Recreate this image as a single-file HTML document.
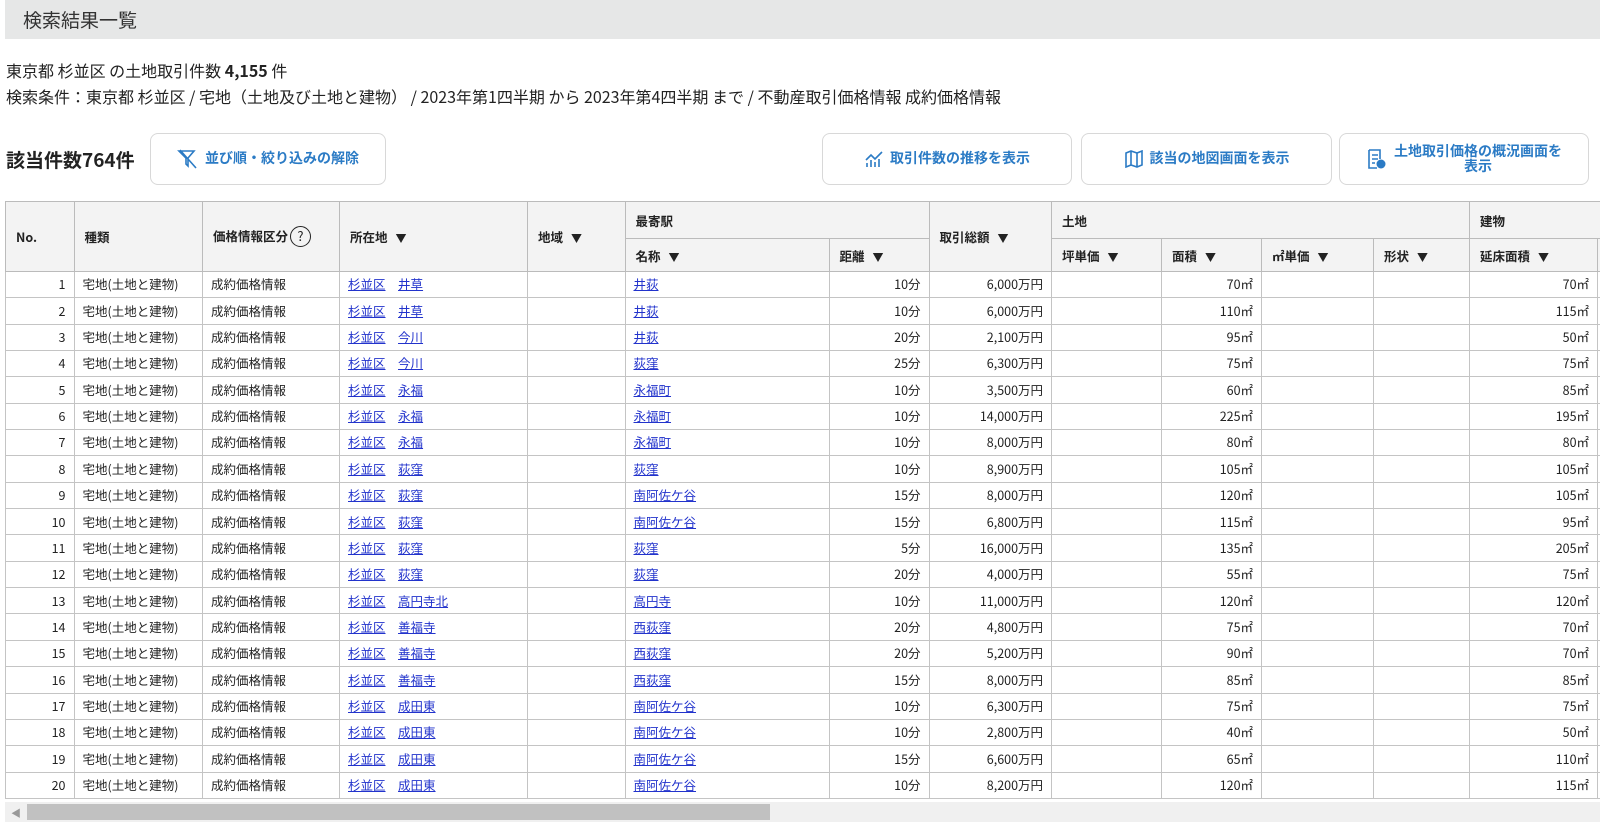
<!DOCTYPE html>
<html><head><meta charset="utf-8"><style>
*{box-sizing:border-box;margin:0;padding:0}
body{width:1600px;height:827px;overflow:hidden;background:#fff;font-family:"Noto Sans CJK JP","Liberation Sans",sans-serif;color:#222}
.title{position:absolute;left:5px;top:0;width:1595px;height:39px;background:#e6e7e7;font-size:19px;line-height:39px;padding:0 0 0 18px;color:#333}
.l1{position:absolute;left:6px;top:58px;font-size:16px;line-height:24px}
.l2{position:absolute;left:6px;top:84px;font-size:16px;line-height:24px}
.cnt{position:absolute;left:6px;top:146px;font-size:19px;font-weight:bold;line-height:28px}
.btn{position:absolute;top:133px;height:52px;border:1px solid #d8d8d8;border-radius:8px;background:#fff;color:#2b7bc5;font-size:14px;font-weight:bold;display:flex;align-items:center;justify-content:center;gap:6px;line-height:1.1;text-align:center}
.wrap{position:absolute;left:5px;top:201px;width:1595px;height:598px;overflow:hidden}
table{border-collapse:collapse;table-layout:fixed;width:1750px;font-size:12.5px}
th{background:#f3f3f3;font-weight:bold;text-align:left;padding-left:10px;border:1px solid #bbb;font-size:12.5px;color:#222}
td{border:1px solid #c4c4c4;padding:0 8px;height:26.35px;white-space:nowrap;line-height:1}
td.r{text-align:right}
a{color:#2233cc;text-decoration:underline}
.tri{font-size:11px;margin-left:8px}
.sb{position:absolute;left:5px;top:802px;width:1595px;height:20px;background:#f0f0f0}
.sb .th{position:absolute;left:22px;top:2px;width:743px;height:16px;background:#c1c1c1}
.sb .ar{position:absolute;left:6px;top:3px;font-size:10px;color:#999}
</style></head><body>
<div class="title">検索結果一覧</div>
<div class="l1">東京都 杉並区 の土地取引件数 <b>4,155</b> 件</div>
<div class="l2">検索条件：東京都 杉並区 / 宅地（土地及び土地と建物） / 2023年第1四半期 から 2023年第4四半期 まで / 不動産取引価格情報 成約価格情報</div>
<div class="cnt">該当件数764件</div>
<div class="btn" style="left:150px;width:236px"><svg width="22" height="20" viewBox="0 0 22 20"><path d="M2 2h15l-6 7v8l-2-2V9z M3 1l16 18" fill="none" stroke="#2b7bc5" stroke-width="1.6"/></svg>並び順・絞り込みの解除</div>
<div class="btn" style="left:822px;width:250px"><svg width="20" height="18" viewBox="0 0 20 18"><path d="M2 10l5-5 4 4 7-7M3 17v-4M7 17v-7M11 17v-5M15 17v-8" fill="none" stroke="#2b7bc5" stroke-width="1.6"/></svg>取引件数の推移を表示</div>
<div class="btn" style="left:1081px;width:251px"><svg width="20" height="18" viewBox="0 0 20 18"><path d="M2 3l5-2 6 2 5-2v14l-5 2-6-2-5 2z M7 1v14M13 3v14" fill="none" stroke="#2b7bc5" stroke-width="1.6"/></svg>該当の地図画面を表示</div>
<div class="btn" style="left:1339px;width:250px"><svg width="22" height="22" viewBox="0 0 22 22"><path d="M3 2h11v9M3 2v18h8M6 7h6M6 11h6M6 15h3" fill="none" stroke="#2b7bc5" stroke-width="1.6"/><circle cx="15" cy="16" r="4.5" fill="#2b7bc5"/></svg><span>土地取引価格の概況画面を<br>表示</span></div>
<div class="wrap"><table>
<colgroup><col style="width:68.5px"><col style="width:128.5px"><col style="width:137px"><col style="width:188px"><col style="width:97.5px"><col style="width:204px"><col style="width:100px"><col style="width:122.5px"><col style="width:110px"><col style="width:100px"><col style="width:112px"><col style="width:96px"><col style="width:128px"><col style="width:160px"></colgroup>
<tr style="height:37px"><th rowspan="2">No.</th><th rowspan="2">種類</th><th rowspan="2">価格情報区分<span style="display:inline-block;width:21px;height:21px;border:1.5px solid #222;border-radius:50%;text-align:center;line-height:18px;font-size:13px;margin-left:2px;font-weight:normal">?</span></th><th rowspan="2">所在地<span class="tri">▼</span></th><th rowspan="2">地域<span class="tri">▼</span></th><th colspan="2">最寄駅</th><th rowspan="2">取引総額<span class="tri">▼</span></th><th colspan="4">土地</th><th colspan="2">建物</th></tr>
<tr style="height:33px"><th>名称<span class="tri">▼</span></th><th>距離<span class="tri">▼</span></th><th>坪単価<span class="tri">▼</span></th><th>面積<span class="tri">▼</span></th><th>㎡単価<span class="tri">▼</span></th><th>形状<span class="tri">▼</span></th><th>延床面積<span class="tri">▼</span></th><th></th></tr>
<tr><td class="r">1</td><td>宅地(土地と建物)</td><td>成約価格情報</td><td><a>杉並区</a>　<a>井草</a></td><td></td><td><a>井荻</a></td><td class="r">10分</td><td class="r">6,000万円</td><td></td><td class="r">70㎡</td><td></td><td></td><td class="r">70㎡</td><td></td></tr>
<tr><td class="r">2</td><td>宅地(土地と建物)</td><td>成約価格情報</td><td><a>杉並区</a>　<a>井草</a></td><td></td><td><a>井荻</a></td><td class="r">10分</td><td class="r">6,000万円</td><td></td><td class="r">110㎡</td><td></td><td></td><td class="r">115㎡</td><td></td></tr>
<tr><td class="r">3</td><td>宅地(土地と建物)</td><td>成約価格情報</td><td><a>杉並区</a>　<a>今川</a></td><td></td><td><a>井荻</a></td><td class="r">20分</td><td class="r">2,100万円</td><td></td><td class="r">95㎡</td><td></td><td></td><td class="r">50㎡</td><td></td></tr>
<tr><td class="r">4</td><td>宅地(土地と建物)</td><td>成約価格情報</td><td><a>杉並区</a>　<a>今川</a></td><td></td><td><a>荻窪</a></td><td class="r">25分</td><td class="r">6,300万円</td><td></td><td class="r">75㎡</td><td></td><td></td><td class="r">75㎡</td><td></td></tr>
<tr><td class="r">5</td><td>宅地(土地と建物)</td><td>成約価格情報</td><td><a>杉並区</a>　<a>永福</a></td><td></td><td><a>永福町</a></td><td class="r">10分</td><td class="r">3,500万円</td><td></td><td class="r">60㎡</td><td></td><td></td><td class="r">85㎡</td><td></td></tr>
<tr><td class="r">6</td><td>宅地(土地と建物)</td><td>成約価格情報</td><td><a>杉並区</a>　<a>永福</a></td><td></td><td><a>永福町</a></td><td class="r">10分</td><td class="r">14,000万円</td><td></td><td class="r">225㎡</td><td></td><td></td><td class="r">195㎡</td><td></td></tr>
<tr><td class="r">7</td><td>宅地(土地と建物)</td><td>成約価格情報</td><td><a>杉並区</a>　<a>永福</a></td><td></td><td><a>永福町</a></td><td class="r">10分</td><td class="r">8,000万円</td><td></td><td class="r">80㎡</td><td></td><td></td><td class="r">80㎡</td><td></td></tr>
<tr><td class="r">8</td><td>宅地(土地と建物)</td><td>成約価格情報</td><td><a>杉並区</a>　<a>荻窪</a></td><td></td><td><a>荻窪</a></td><td class="r">10分</td><td class="r">8,900万円</td><td></td><td class="r">105㎡</td><td></td><td></td><td class="r">105㎡</td><td></td></tr>
<tr><td class="r">9</td><td>宅地(土地と建物)</td><td>成約価格情報</td><td><a>杉並区</a>　<a>荻窪</a></td><td></td><td><a>南阿佐ケ谷</a></td><td class="r">15分</td><td class="r">8,000万円</td><td></td><td class="r">120㎡</td><td></td><td></td><td class="r">105㎡</td><td></td></tr>
<tr><td class="r">10</td><td>宅地(土地と建物)</td><td>成約価格情報</td><td><a>杉並区</a>　<a>荻窪</a></td><td></td><td><a>南阿佐ケ谷</a></td><td class="r">15分</td><td class="r">6,800万円</td><td></td><td class="r">115㎡</td><td></td><td></td><td class="r">95㎡</td><td></td></tr>
<tr><td class="r">11</td><td>宅地(土地と建物)</td><td>成約価格情報</td><td><a>杉並区</a>　<a>荻窪</a></td><td></td><td><a>荻窪</a></td><td class="r">5分</td><td class="r">16,000万円</td><td></td><td class="r">135㎡</td><td></td><td></td><td class="r">205㎡</td><td></td></tr>
<tr><td class="r">12</td><td>宅地(土地と建物)</td><td>成約価格情報</td><td><a>杉並区</a>　<a>荻窪</a></td><td></td><td><a>荻窪</a></td><td class="r">20分</td><td class="r">4,000万円</td><td></td><td class="r">55㎡</td><td></td><td></td><td class="r">75㎡</td><td></td></tr>
<tr><td class="r">13</td><td>宅地(土地と建物)</td><td>成約価格情報</td><td><a>杉並区</a>　<a>高円寺北</a></td><td></td><td><a>高円寺</a></td><td class="r">10分</td><td class="r">11,000万円</td><td></td><td class="r">120㎡</td><td></td><td></td><td class="r">120㎡</td><td></td></tr>
<tr><td class="r">14</td><td>宅地(土地と建物)</td><td>成約価格情報</td><td><a>杉並区</a>　<a>善福寺</a></td><td></td><td><a>西荻窪</a></td><td class="r">20分</td><td class="r">4,800万円</td><td></td><td class="r">75㎡</td><td></td><td></td><td class="r">70㎡</td><td></td></tr>
<tr><td class="r">15</td><td>宅地(土地と建物)</td><td>成約価格情報</td><td><a>杉並区</a>　<a>善福寺</a></td><td></td><td><a>西荻窪</a></td><td class="r">20分</td><td class="r">5,200万円</td><td></td><td class="r">90㎡</td><td></td><td></td><td class="r">70㎡</td><td></td></tr>
<tr><td class="r">16</td><td>宅地(土地と建物)</td><td>成約価格情報</td><td><a>杉並区</a>　<a>善福寺</a></td><td></td><td><a>西荻窪</a></td><td class="r">15分</td><td class="r">8,000万円</td><td></td><td class="r">85㎡</td><td></td><td></td><td class="r">85㎡</td><td></td></tr>
<tr><td class="r">17</td><td>宅地(土地と建物)</td><td>成約価格情報</td><td><a>杉並区</a>　<a>成田東</a></td><td></td><td><a>南阿佐ケ谷</a></td><td class="r">10分</td><td class="r">6,300万円</td><td></td><td class="r">75㎡</td><td></td><td></td><td class="r">75㎡</td><td></td></tr>
<tr><td class="r">18</td><td>宅地(土地と建物)</td><td>成約価格情報</td><td><a>杉並区</a>　<a>成田東</a></td><td></td><td><a>南阿佐ケ谷</a></td><td class="r">10分</td><td class="r">2,800万円</td><td></td><td class="r">40㎡</td><td></td><td></td><td class="r">50㎡</td><td></td></tr>
<tr><td class="r">19</td><td>宅地(土地と建物)</td><td>成約価格情報</td><td><a>杉並区</a>　<a>成田東</a></td><td></td><td><a>南阿佐ケ谷</a></td><td class="r">15分</td><td class="r">6,600万円</td><td></td><td class="r">65㎡</td><td></td><td></td><td class="r">110㎡</td><td></td></tr>
<tr><td class="r">20</td><td>宅地(土地と建物)</td><td>成約価格情報</td><td><a>杉並区</a>　<a>成田東</a></td><td></td><td><a>南阿佐ケ谷</a></td><td class="r">10分</td><td class="r">8,200万円</td><td></td><td class="r">120㎡</td><td></td><td></td><td class="r">115㎡</td><td></td></tr>
</table></div>
<div class="sb"><span class="ar">◀</span><div class="th"></div></div>
</body></html>
